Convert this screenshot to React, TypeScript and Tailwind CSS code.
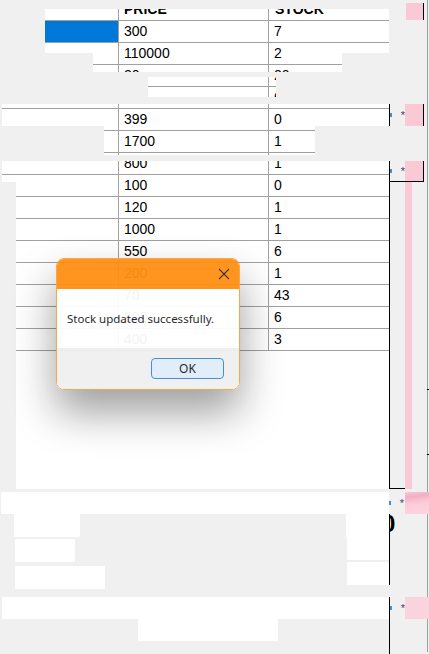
import React from "react";

const rows: { p: string; s: string; sel?: boolean }[] = [
  { p: "300", s: "7", sel: true },
  { p: "110000", s: "2" },
  { p: "20", s: "20" },
  { p: "150", s: "6" },
  { p: "399", s: "0" },
  { p: "1700", s: "1" },
  { p: "800", s: "1" },
  { p: "100", s: "0" },
  { p: "120", s: "1" },
  { p: "1000", s: "1" },
  { p: "550", s: "6" },
  { p: "200", s: "1" },
  { p: "70", s: "43" },
  { p: "800", s: "6" },
  { p: "400", s: "3" },
];

function Star() {
  return (
    <div className="flex h-full w-[15px] items-center">
      <div className="h-[4px] w-[2px] bg-[#3c8fd8]" />
      <span className="ml-[9px] text-[11px] leading-none text-[#4b3b6b]">*</span>
    </div>
  );
}

export default function App() {
  return (
    <div
      className="relative h-[654px] w-[429px] overflow-hidden bg-[#f0f0f0] text-black"
      style={{ fontFamily: '"Liberation Sans", Arial, sans-serif' }}
    >
      {/* top region */}
      <div className="flex h-[489px]">
        {/* data grid */}
        <div className="ml-[2px] flex w-[387px] flex-col bg-white">
          <div className="-mt-[1px] flex h-[22px] border-b border-[#a0a0a0] text-[14px] font-bold">
            <div className="w-[117px] border-r border-[#a0a0a0]" />
            <div className="flex w-[150px] items-center border-r border-[#a0a0a0] pl-[5px]">PRICE</div>
            <div className="flex flex-1 items-center pl-[6px]">STOCK</div>
          </div>
          {rows.map((r, i) => (
            <div key={i} className="flex h-[22px] border-b border-[#a0a0a0] text-[14px]">
              <div className={"w-[117px] border-r border-[#a0a0a0] " + (r.sel ? "bg-[#0078d7]" : "")} />
              <div className="flex w-[150px] items-center border-r border-[#a0a0a0] pl-[5px]">{r.p}</div>
              <div className="flex flex-1 items-center pl-[5px]">{r.s}</div>
            </div>
          ))}
        </div>

        {/* right strip */}
        <div className="flex w-[38px] flex-col">
          <div className="ml-[17px] mt-[3px] h-[17px] w-[18px] border-r border-black bg-[#fbc8d6]" />
          <div className="mt-[84px] flex h-[22px] w-[35px]">
            <div className="h-full border-l border-black">
              <Star />
            </div>
            <div className="h-full w-[19px] border-r border-black bg-[#fbc8d6]" />
          </div>
          <div className="mt-[35px] flex h-[21px] w-[35px] border-b border-black">
            <div className="h-full border-l border-black">
              <Star />
            </div>
            <div className="h-full w-[19px] border-r border-black bg-[#fbc8d6]" />
          </div>
          <div className="flex h-[307px] w-[23px]">
            <div className="h-full w-[16px] border-b border-l border-black" />
            <div className="h-full w-[7px] bg-[#fbc8d6]" />
          </div>
        </div>
      </div>

      {/* bottom form area */}
      <div className="mt-[3px] flex flex-col">
        {/* row A */}
        <div className="flex h-[22px]">
          <div className="ml-[1px] w-[388px] bg-white" />
          <Star />
          <div className="relative z-10 ml-[1px] h-full w-[24px] bg-[linear-gradient(172deg,#fbc8d6_0%,#f1afc3_22%,#f7bdcf_36%,#fbcdda_55%,#fcd4df_100%)]" />
        </div>

        {/* rows B-D */}
        <div className="flex h-[83px]">
          <div className="flex w-[346px] flex-col">
            <div className="ml-[14px] h-[23px] w-[66px] bg-white" />
            <div className="ml-[15px] mt-[2px] h-[23px] w-[60px] bg-white" />
            <div className="ml-[15px] mt-[4px] h-[23px] w-[90px] bg-white" />
          </div>
          <div className="flex w-[43px] flex-col">
            <div className="h-[23px] w-[43px] bg-white" />
            <div className="ml-[1px] h-[23px] w-[42px] bg-white" />
            <div className="ml-[1px] mt-[2px] h-[23px] w-[42px] bg-white" />
          </div>
          <div className="flex h-[71px] w-[1px] bg-black" />
          <div className="h-[19px] w-[8px] overflow-hidden">
            <span className="-ml-[8px] block text-[24px] font-bold leading-[19px]">0</span>
          </div>
        </div>

        {/* rows E-F */}
        <div className="flex h-[57px]">
          <div className="flex w-[389px] flex-col">
            <div className="ml-[2px] h-[22px] w-[387px] bg-white" />
            <div className="ml-[138px] h-[22px] w-[140px] bg-white" />
          </div>
          <div className="h-full w-[1px] bg-black" />
          <div className="flex h-[22px]">
            <Star />
            <div className="relative z-10 h-full w-[24px] bg-[#fbd3df]" />
          </div>
        </div>
        <div className="h-[2px] w-[428px] bg-[#6a6a6a]" />
      </div>

      {/* window right edge */}
      <div className="absolute left-[427px] top-0 h-[652px] w-[1px] bg-[#a0a0a0]" />
      <div className="absolute left-[427px] top-[389px] h-[1px] w-[2px] bg-black" />
      <div className="absolute left-[427px] top-[454px] h-[1px] w-[2px] bg-black" />

      {/* repaint glitches lying over the grid */}
      <div className="absolute left-0 top-0 h-[9px] w-[389px] bg-[#f0f0f0]" />
      <div className="absolute left-0 top-[9px] h-[44px] w-[45px] bg-[#f0f0f0]" />
      <div className="absolute left-0 top-[53px] h-[19px] w-[93px] bg-[#f0f0f0]" />
      <div className="absolute left-[342px] top-[53px] h-[19px] w-[47px] bg-[#f0f0f0]" />
      <div className="absolute left-0 top-[72px] h-[5px] w-[389px] bg-[#f0f0f0]" />
      <div className="absolute left-0 top-[77px] h-[20px] w-[148px] bg-[#f0f0f0]" />
      <div className="absolute left-[276px] top-[77px] h-[20px] w-[113px] bg-[#f0f0f0]" />
      <div className="absolute left-0 top-[97px] h-[7px] w-[389px] bg-[#f0f0f0]" />
      <div className="absolute left-0 top-[126px] h-[29px] w-[104px] bg-[#f0f0f0]" />
      <div className="absolute left-[315px] top-[126px] h-[29px] w-[74px] bg-[#f0f0f0]" />
      <div className="absolute left-0 top-[155px] h-[6px] w-[389px] bg-[#f0f0f0]" />
      <div className="absolute left-0 top-[182px] h-[307px] w-[16px] bg-[#f0f0f0]" />

      {/* message box */}
      <div
        className="absolute left-[56px] top-[258px] flex h-[132px] w-[184px] flex-col overflow-hidden rounded-[8px] border border-[#f5a443] opacity-[0.95] shadow-[0_22px_42px_rgba(0,0,0,0.4)]"
        style={{ fontFamily: '"Noto Sans", "Open Sans", sans-serif' }}
      >
        <div className="flex h-[30px] items-center justify-end bg-[#ff9012] pr-[9px]">
          <svg width="12" height="12" viewBox="0 0 12 12" fill="none">
            <path d="M1 1L11 11M11 1L1 11" stroke="#3a2a1a" strokeWidth="1.1" />
          </svg>
        </div>
        <div className="flex h-[59px] items-center bg-white pl-[10px] text-[11.5px] text-[#1a1a1a]">
          Stock updated successfully.
        </div>
        <div className="flex flex-1 items-start justify-end bg-[#f0f0f0] pr-[15px] pt-[10px]">
          <button className="flex h-[21px] w-[73px] items-center justify-center rounded-[4px] border border-[#3d8ad6] bg-[#e0eef9] text-[12px] text-[#1a1a1a]">
            OK
          </button>
        </div>
      </div>
    </div>
  );
}
